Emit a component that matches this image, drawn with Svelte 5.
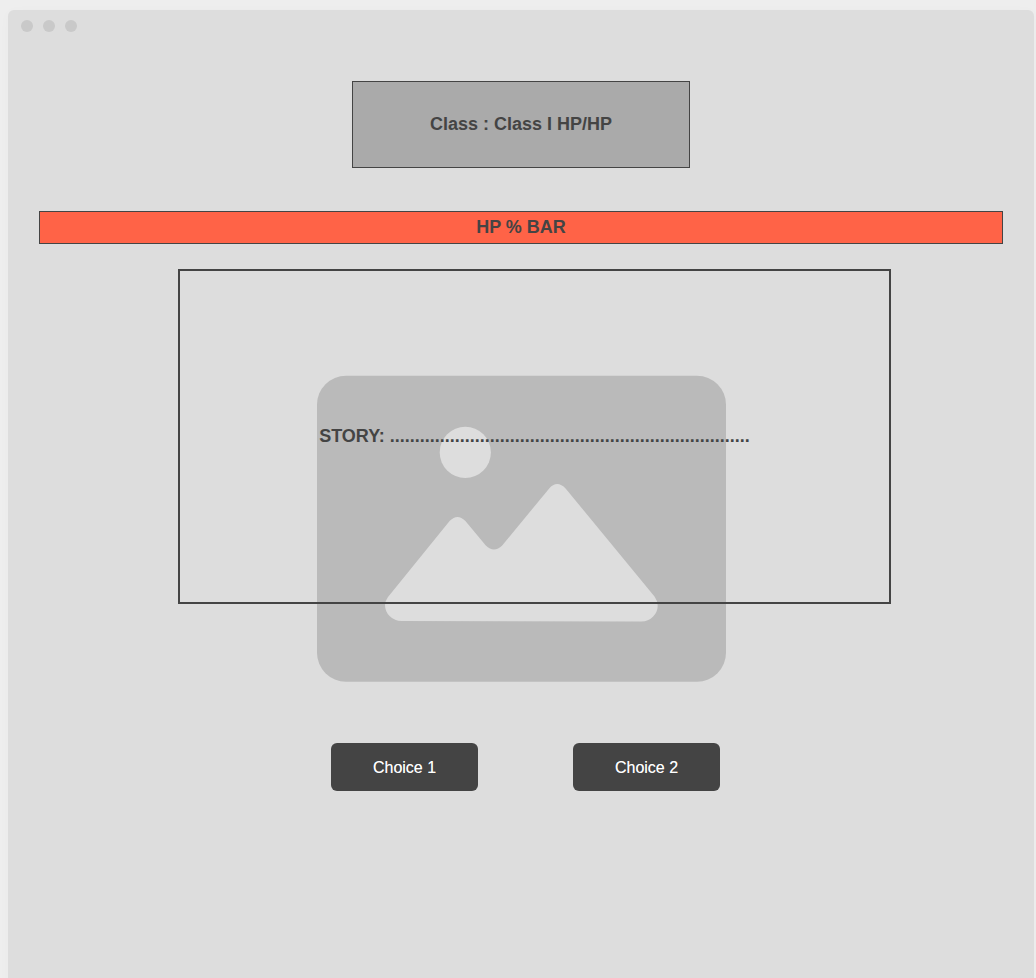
<script>
  const choices = ['Choice 1', 'Choice 2'];
  const story = 'STORY: ' + '.'.repeat(72);
</script>

<div class="page">
  <main class="window">
    <header class="titlebar">
      <i></i><i></i><i></i>
    </header>
    <section class="status">Class : Class I HP/HP</section>
    <section class="health">HP % BAR</section>
    <div class="scene">
      <svg class="picture" viewBox="0 0 409 307" width="409" height="307" aria-hidden="true">
        <rect y="0.7" width="409" height="306" rx="29" fill="#bababa" />
        <circle cx="148.300" cy="77.4" r="25.6" fill="#ddd" />
        <path
          fill="#ddd"
          d="M71 222 L132.800 145.800 Q140.500 138 148.200 145.800 L168.800 170.500 Q177 178.500 185.200 170.500 L232 113.700 Q240 104.500 248.800 113.700 L337.500 221.500 Q340.700 226 340.700 230.500 A16.500 16 0 0 1 324.500 246.500 L84.500 246 A16.500 16 0 0 1 68 230 Q68 226 71 222 Z"
        />
      </svg>
      <section class="story">{story}</section>
    </div>
    <nav class="choices">
      {#each choices as choice}
        <button>{choice}</button>
      {/each}
    </nav>
  </main>
</div>

<style>
  :global(body) {
    margin: 0;
    background: #eee;
  }
  .page {
    box-sizing: border-box;
    height: 978px;
    padding: 10px 2px 0 8px;
    overflow: hidden;
    font-family: "Liberation Sans", Arial, sans-serif;
    color: #444;
  }
  .window {
    display: flex;
    flex-direction: column;
    align-items: center;
    box-sizing: border-box;
    height: 1000px;
    background: #ddd;
    border-radius: 6px;
    box-shadow: 0 2px 12px rgba(0, 0, 0, 0.025);
  }
  .titlebar {
    display: flex;
    align-self: stretch;
    gap: 10px;
    height: 12px;
    padding: 10px 13px 49px;
  }
  .titlebar i {
    width: 12px;
    height: 12px;
    border-radius: 50%;
    background: #c9c9c9;
  }
  .status,
  .health,
  .story {
    display: flex;
    align-items: center;
    justify-content: center;
    box-sizing: border-box;
    padding-bottom: 2px;
    font-size: 18px;
    font-weight: bold;
    line-height: 20px;
    white-space: nowrap;
  }
  .status {
    width: 338px;
    height: 87px;
    border: 1px solid #444;
    background: #aaa;
  }
  .health {
    width: 964px;
    height: 33px;
    margin-top: 43px;
    border: 1px solid #444;
    background: #ff6347;
  }
  .scene {
    display: grid;
    width: 964px;
    height: 414px;
    margin-top: 25px;
  }
  .scene > * {
    grid-area: 1 / 1;
  }
  .picture {
    display: block;
    margin: 106px 0 0 278px;
  }
  .story {
    z-index: 1;
    width: 713px;
    height: 335px;
    margin-left: 139px;
    border: 2px solid #444;
  }
  .choices {
    display: flex;
    gap: 95px;
    margin: 60px 0 0 9px;
  }
  button {
    width: 147px;
    height: 48px;
    padding: 2px 0 0;
    border: 0;
    border-radius: 6px;
    background: #444;
    color: #fff;
    font: 16px "Liberation Sans", Arial, sans-serif;
    text-shadow: 0 0 0.5px rgba(255, 255, 255, 0.6);
  }
</style>
